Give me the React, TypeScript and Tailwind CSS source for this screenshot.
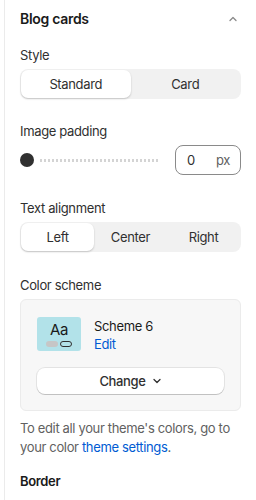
import React, { useState } from "react";

type Option = {
  value: string;
  label: string;
};

const styleOptions: Option[] = [
  { value: "standard", label: "Standard" },
  { value: "card", label: "Card" },
];

const alignOptions: Option[] = [
  { value: "left", label: "Left" },
  { value: "center", label: "Center" },
  { value: "right", label: "Right" },
];

const Segmented = ({
  options,
  value,
  onChange,
}: {
  options: Option[];
  value: string;
  onChange: (v: string) => void;
}) => (
  <div className="flex h-[30px] rounded-lg bg-[#f1f1f1] p-px">
    {options.map((o) => (
      <button
        key={o.value}
        onClick={() => onChange(o.value)}
        className={`flex-1 rounded-[7px] text-[#303030] ${
          o.value === value ? "bg-white shadow-[0_1px_2px_rgba(0,0,0,0.2)]" : ""
        }`}
      >
        {o.label}
      </button>
    ))}
  </div>
);

export default function App() {
  const [style, setStyle] = useState("standard");
  const [align, setAlign] = useState("left");

  return (
    <div className="min-h-[500px] w-[256px] bg-white font-['Inter',sans-serif] text-[13px] leading-5 tracking-[-0.35px] text-[#303030]">
      <div className="ml-1 min-h-[500px] border-l border-[#ebebeb] pl-[15px] pr-[15px] pt-[9px]">
        <div className="flex items-center justify-between">
          <h2 className="text-[14px] font-semibold tracking-[-0.3px] text-[#1a1a1a]">Blog cards</h2>
          <svg width="12" height="12" viewBox="0 0 12 12" className="mr-0.5 text-[#8a8a8a]">
            <path d="M3 7.5 6 4.5l3 3" fill="none" stroke="currentColor" strokeWidth="1.3" strokeLinecap="round" strokeLinejoin="round" />
          </svg>
        </div>

        <div className="mt-4">
          <p className="mb-1">Style</p>
          <Segmented options={styleOptions} value={style} onChange={setStyle} />
        </div>

        <div className="mt-[22px]">
          <p className="mb-1">Image padding</p>
          <div className="flex items-center gap-4">
            <div className="flex flex-1 items-center">
              <div className="h-3.5 w-3.5 shrink-0 rounded-full bg-[#303030]" />
              <div className="ml-1.5 h-[3px] flex-1 bg-[repeating-linear-gradient(90deg,#d4d4d4_0_2px,transparent_2px_4px)]" />
            </div>
            <div className="flex h-[30px] w-[66px] items-center rounded-lg border border-[#8a8a8a] pl-[11px] pr-[10px]">
              <span className="flex-1">0</span>
              <span className="text-[#616161]">px</span>
            </div>
          </div>
        </div>

        <div className="mt-[23px]">
          <p className="mb-1">Text alignment</p>
          <Segmented options={alignOptions} value={align} onChange={setAlign} />
        </div>

        <div className="mt-[23px]">
          <p className="mb-1">Color scheme</p>
          <div className="rounded-md border border-[#ebebeb] bg-[#f7f7f7] px-4 pb-4 pt-[17px]">
            <div className="flex h-[34px] items-start gap-[13px]">
              <div className="flex h-[34px] w-11 flex-col items-center justify-center rounded-[3px] bg-[#b2e2e9]">
                <span className="text-[15px] leading-4 text-[#1a1a1a]">Aa</span>
                <div className="mt-[3px] flex gap-[2px]">
                  <div className="h-[6px] w-3 rounded-full bg-[#c6c6c6]" />
                  <div className="h-[6px] w-3 rounded-full border border-[#303030]" />
                </div>
              </div>
              <div className="leading-[18px]">
                <p className="text-[#1a1a1a]">Scheme 6</p>
                <a className="text-[#005bd3]">Edit</a>
              </div>
            </div>
            <button className="mt-[17px] flex h-[26px] w-full items-center justify-center gap-1.5 rounded-lg bg-white font-medium text-[#303030] shadow-[0_1px_0_rgba(0,0,0,0.15),0_0_0_1px_rgba(0,0,0,0.08)]">
              Change
              <svg width="10" height="10" viewBox="0 0 10 10">
                <path d="M2 3.5 5 6.5l3-3" fill="none" stroke="currentColor" strokeWidth="1.3" strokeLinecap="round" strokeLinejoin="round" />
              </svg>
            </button>
          </div>
        </div>

        <p className="mt-2 leading-[19px] text-[#616161]">
          To edit all your theme's colors, go to your color{" "}
          <a className="text-[#005bd3]">theme settings</a>.
        </p>

        <h3 className="mt-[14px] font-semibold text-[#1a1a1a]">Border</h3>
      </div>
    </div>
  );
}
